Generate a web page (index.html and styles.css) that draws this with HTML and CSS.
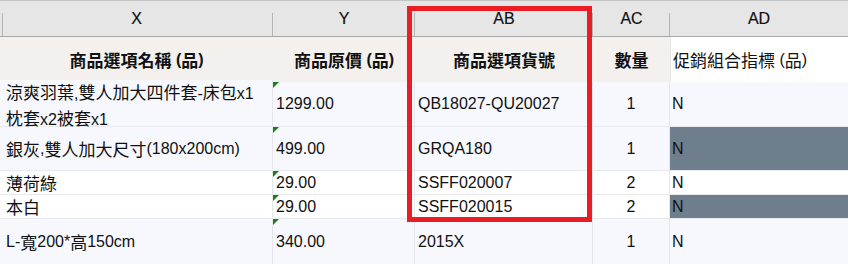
FILE: index.html
```html
<!DOCTYPE html>
<html lang="zh-Hant">
<head>
<meta charset="utf-8">
<title>Sheet</title>
<link rel="stylesheet" href="styles.css">
</head>
<body>
<div class="sheet">
  <div class="grid">
    <div class="col-head first">X</div>
    <div class="col-head">Y</div>
    <div class="col-head">AB</div>
    <div class="col-head">AC</div>
    <div class="col-head last">AD</div>

    <div class="title"><span class="zh">商品選項名稱</span>&nbsp;(<span class="zh">品</span>)</div>
    <div class="title"><span class="zh">商品原價</span>&nbsp;(<span class="zh">品</span>)</div>
    <div class="title"><span class="zh">商品選項貨號</span></div>
    <div class="title"><span class="zh">數量</span></div>
    <div class="title plain"><span class="zh">促銷組合指標</span>&nbsp;(<span class="zh">品</span>)</div>

    <div class="cell r1 tint wrap"><span class="zh">涼爽羽葉</span>,<span class="zh">雙人加大四件套</span>-<span class="zh">床包</span>x1<br><span class="zh">枕套</span>x2<span class="zh">被套</span>x1</div>
    <div class="cell r1 tint flag">1299.00</div>
    <div class="cell r1 tint">QB18027-QU20027</div>
    <div class="cell r1 tint center">1</div>
    <div class="cell r1 tint">N</div>

    <div class="cell r2 tint"><span class="zh">銀灰</span>,<span class="zh">雙人加大尺寸</span>(180x200cm)</div>
    <div class="cell r2 tint flag">499.00</div>
    <div class="cell r2 tint">GRQA180</div>
    <div class="cell r2 tint center">1</div>
    <div class="cell r2 slate">N</div>

    <div class="cell r3"><span class="zh">薄荷綠</span></div>
    <div class="cell r3 flag">29.00</div>
    <div class="cell r3">SSFF020007</div>
    <div class="cell r3 center">2</div>
    <div class="cell r3">N</div>

    <div class="cell r4"><span class="zh">本白</span></div>
    <div class="cell r4 flag">29.00</div>
    <div class="cell r4">SSFF020015</div>
    <div class="cell r4 center">2</div>
    <div class="cell r4 slate">N</div>

    <div class="cell r5 tint">L-<span class="zh">寬</span>200*<span class="zh">高</span>150cm</div>
    <div class="cell r5 tint flag">340.00</div>
    <div class="cell r5 tint">2015X</div>
    <div class="cell r5 tint center">1</div>
    <div class="cell r5 tint">N</div>
  </div>
  <div class="highlight"></div>
</div>
</body>
</html>
```

FILE: styles.css
```css
* { box-sizing: border-box; }

html, body {
  margin: 0;
  padding: 0;
  background: #f7f8fd;
  overflow: hidden;
}

body {
  font-family: "Liberation Sans", "Noto Sans CJK TC", Arial, sans-serif;
  font-size: 16px;
  color: #111;
}

.zh {
  font-family: "Noto Sans CJK TC", sans-serif;
  font-size: 17px;
}

.sheet {
  position: relative;
  width: 848px;
  height: 264px;
  border-top: 1px solid #c4c4c4;
}

.grid {
  display: grid;
  grid-template-columns: 273px 142px 178px 77px 1fr;
  grid-template-rows: 36px 45px 45px 44px 24px 24px 46px;
}

.col-head {
  position: relative;
  background: #e6e6e6;
  border-bottom: 1px solid #a9a9a9;
  display: flex;
  align-items: center;
  justify-content: center;
  padding-top: 1px;
  color: #111;
  -webkit-text-stroke: 0.2px #111;
}

.col-head::after {
  content: "";
  position: absolute;
  right: 0;
  top: 12px;
  bottom: 0;
  width: 1px;
  background: #b4b4b4;
}

.col-head.first::before {
  content: "";
  position: absolute;
  left: 2px;
  top: 12px;
  bottom: 0;
  width: 1px;
  background: #b4b4b4;
}

.col-head.last::after { display: none; }

.title {
  background: #f3f0ee;
  display: flex;
  align-items: center;
  justify-content: center;
  font-weight: bold;
  color: #111;
  white-space: nowrap;
}

.title.plain {
  background: #ffffff;
  justify-content: flex-start;
  font-weight: normal;
  padding-left: 2px;
  border-left: 1px solid #e6e6e6;
}

.cell {
  position: relative;
  display: flex;
  align-items: center;
  padding-left: 3px;
  background: #ffffff;
  border-right: 1px solid #e6e7ea;
  border-bottom: 1px solid #e8e9ec;
  white-space: nowrap;
  line-height: 24px;
}

.cell:nth-child(5n+1) { padding-left: 6px; }
.cell:nth-child(5n) { border-right: none; padding-left: 2px; }

.cell.tint { background: #f7f8fd; }
.cell.slate { background: #6f7e8d; }
.cell.center { justify-content: center; padding-left: 0; }

.cell.wrap {
  display: block;
  margin-top: -2px;
  height: calc(100% + 2px);
}

.cell.flag::before {
  content: "";
  position: absolute;
  left: 0;
  top: 0;
  border-top: 6px solid #1b7d1b;
  border-right: 6px solid transparent;
}

.highlight {
  position: absolute;
  left: 407px;
  top: 5px;
  width: 185px;
  height: 216px;
  border: 5px solid #ea1c24;
  pointer-events: none;
}
```
